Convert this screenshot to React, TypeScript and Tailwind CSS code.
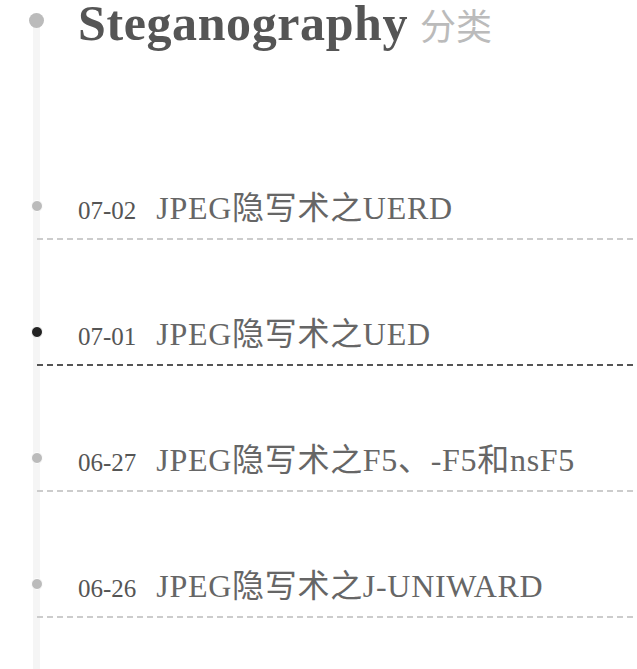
import React from "react";

const serif = { fontFamily: '"Liberation Serif", "Noto Sans CJK SC", serif' };

const posts = [
  { date: "07-02", title: "JPEG隐写术之UERD", active: false },
  { date: "07-01", title: "JPEG隐写术之UED", active: true },
  { date: "06-27", title: "JPEG隐写术之F5、-F5和nsF5", active: false },
  { date: "06-26", title: "JPEG隐写术之J-UNIWARD", active: false },
];

function PostItem({ date, title, active }: { date: string; title: string; active: boolean }) {
  return (
    <div className="relative">
      {/* 圆点 */}
      <span
        className={`absolute left-[31px] top-[12px] z-10 h-[12px] w-[12px] rounded-full border border-white ${
          active ? "bg-[#222]" : "bg-[#bbb]"
        }`}
      />
      <div className="flex h-[40px] items-baseline gap-[20px] pl-[78px] leading-[40px] whitespace-nowrap">
        <span className="text-[25px] text-[#555]">{date}</span>
        <span className="text-[32px] tracking-[0.7px] text-[#666]">{title}</span>
      </div>
      <div
        className={`relative z-10 ml-[37px] mt-[10px] h-[2px] ${
          active
            ? "bg-[repeating-linear-gradient(to_right,#555_0_6px,transparent_6px_10px)]"
            : "bg-[repeating-linear-gradient(to_right,#ccc_0_6px,transparent_6px_10px)]"
        }`}
      />
    </div>
  );
}

export default function App() {
  return (
    <div className="relative min-h-[669px] w-[637px] bg-white" style={serif}>
      {/* 时间线 */}
      <div className="absolute bottom-0 left-[33px] top-[21px] w-[7px] bg-[#f5f5f5]" />

      {/* 标题 */}
      <div className="relative">
        <span className="absolute left-[29px] top-[13px] z-10 h-[15px] w-[15px] rounded-full bg-[#bbb]" />
        <h1 className="flex h-[46px] items-baseline pl-[78px] leading-[46px] whitespace-nowrap">
          <span className="text-[50px] font-bold tracking-[0.6px] text-[#555]">Steganography</span>
          <span className="ml-[12px] text-[36px] text-[#bbb]">分类</span>
        </h1>
      </div>

      {/* 文章列表 */}
      <div className="mt-[142px] flex flex-col gap-[74px]">
        {posts.map((post) => (
          <PostItem key={post.date} {...post} />
        ))}
      </div>
    </div>
  );
}
